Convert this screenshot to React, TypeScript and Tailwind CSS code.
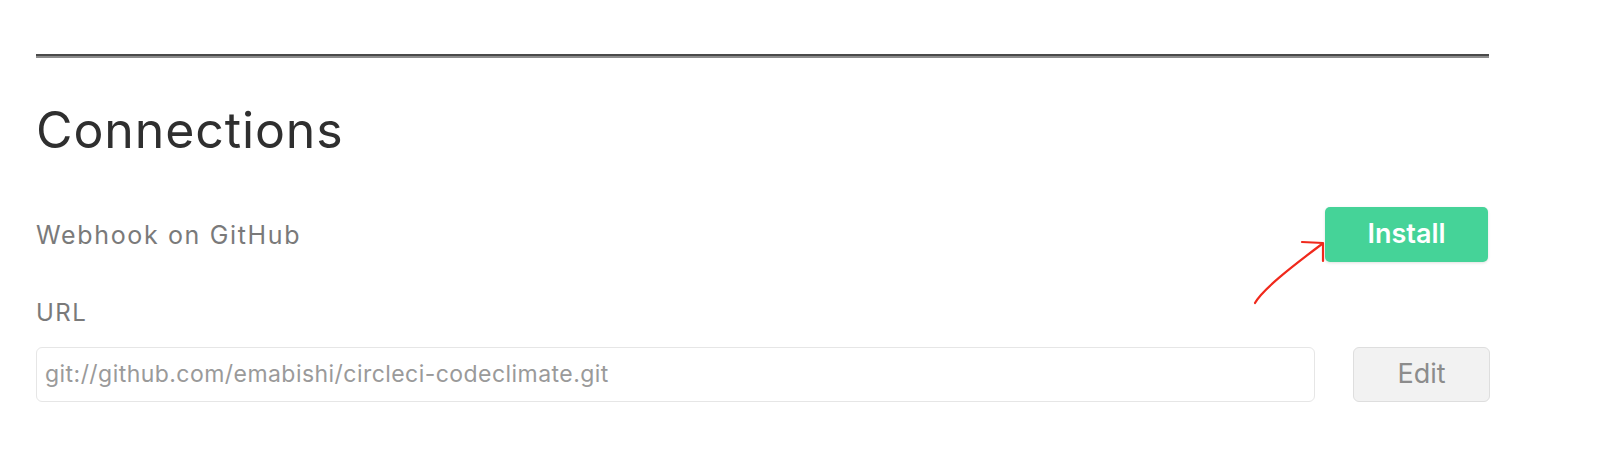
export default function App() {
  return (
    <div className="relative h-[462px] w-[1600px] overflow-hidden bg-white pl-[36px] pt-[54px] font-['Inter',sans-serif]">
      {/* Divider */}
      <div className="h-[4px] w-[1453px] border-t-2 border-b-2 border-t-[#4a4a4a] border-b-[#8c8c8c]" />

      {/* Header */}
      <h2 className="mt-[44px] text-[50px] leading-[56px] font-normal tracking-[0.9px] text-[#2f2f2f]">Connections</h2>

      {/* Webhook row */}
      <div className="mt-[49px] flex w-[1452px] items-center justify-between">
        <span className="text-[25px] leading-[30px] tracking-[1.65px] text-[#7a7a7a]">Webhook on GitHub</span>
        <button className="h-[55px] w-[163px] rounded-[5px] bg-[#45d398] text-[27px] font-semibold text-white shadow-[0_1px_3px_rgba(0,0,0,0.12)]">
          Install
        </button>
      </div>

      {/* URL */}
      <div className="mt-[39px] text-[24px] leading-[24px] tracking-[1.5px] text-[#7a7a7a]">URL</div>
      <div className="mt-[22px] flex w-[1454px] items-center gap-[38px]">
        <div className="flex h-[55px] w-[1279px] items-center rounded-[6px] border border-[#e6e6e6] pl-[8px] text-[23px] tracking-[0.45px] text-[#9a9a9a]">
          git://github.com/emabishi/circleci-codeclimate.git
        </div>
        <button className="h-[55px] w-[137px] rounded-[6px] border border-[#dedede] bg-[#f2f2f2] text-[27px] text-[#8c8c8c]">
          Edit
        </button>
      </div>

      {/* Annotation arrow */}
      <svg className="pointer-events-none absolute left-0 top-0" width="1600" height="462" fill="none">
        <path d="M1255 303 C1262 290 1290 268 1322 244" stroke="#f0291c" strokeWidth="2.2" strokeLinecap="round" />
        <path d="M1302 242 L1323 243 L1323 261" stroke="#f0291c" strokeWidth="2.2" strokeLinecap="round" strokeLinejoin="round" />
      </svg>
    </div>
  );
}
